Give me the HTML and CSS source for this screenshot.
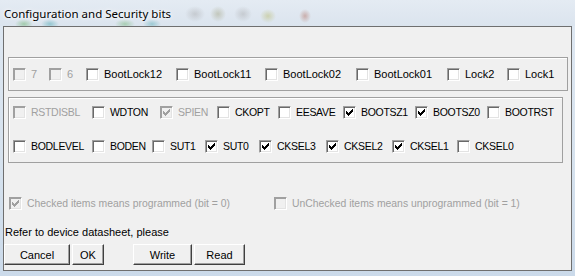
FILE: index.html
```html
<!DOCTYPE html>
<html lang="en">
<head>
    <meta charset="UTF-8">
    <title>Configuration and Security bits</title>
    <link rel="stylesheet" href="styles.css">
</head>
<body>
<svg width="0" height="0" class="defs">
    <symbol id="tick" viewBox="0 0 7 7">
        <path d="M6 0h1v1h-1zM5 1h2v1h-2zM0 2h1v1h-1zM4 2h3v1h-3zM0 3h2v1h-2zM3 3h3v1h-3zM0 4h5v1h-5zM1 5h3v1h-3zM2 6h1v1h-1z"/>
    </symbol>
</svg>
<div class="window">
    <div class="titlebar">
        <span class="title">Configuration and Security bits</span>
    </div>

    <div class="client">
        <!-- Lock bits -->
        <div class="group group-lock">
            <div class="row">
                <label class="item w36 disabled"><span class="box"></span>7</label>
                <label class="item w37 disabled"><span class="box"></span>6</label>
                <label class="item w90"><span class="box"></span>BootLock12</label>
                <label class="item w89"><span class="box"></span>BootLock11</label>
                <label class="item w91"><span class="box"></span>BootLock02</label>
                <label class="item w91"><span class="box"></span>BootLock01</label>
                <label class="item w60"><span class="box"></span>Lock2</label>
                <label class="item"><span class="box"></span>Lock1</label>
            </div>
        </div>

        <!-- Fuse bits -->
        <div class="group group-fuse">
            <div class="row">
                <label class="item w79 disabled"><span class="box"></span>RSTDISBL</label>
                <label class="item w68"><span class="box"></span>WDTON</label>
                <label class="item w57 disabled"><span class="box"><svg class="tick"><use href="#tick"/></svg></span>SPIEN</label>
                <label class="item w61"><span class="box"></span>CKOPT</label>
                <label class="item w65"><span class="box"></span>EESAVE</label>
                <label class="item w72"><span class="box"><svg class="tick"><use href="#tick"/></svg></span>BOOTSZ1</label>
                <label class="item w72"><span class="box"><svg class="tick"><use href="#tick"/></svg></span>BOOTSZ0</label>
                <label class="item"><span class="box"></span>BOOTRST</label>
            </div>
            <div class="row">
                <label class="item w79"><span class="box"></span>BODLEVEL</label>
                <label class="item w60"><span class="box"></span>BODEN</label>
                <label class="item w53"><span class="box"></span>SUT1</label>
                <label class="item w54"><span class="box"><svg class="tick"><use href="#tick"/></svg></span>SUT0</label>
                <label class="item w67"><span class="box"><svg class="tick"><use href="#tick"/></svg></span>CKSEL3</label>
                <label class="item w66"><span class="box"><svg class="tick"><use href="#tick"/></svg></span>CKSEL2</label>
                <label class="item w65"><span class="box"><svg class="tick"><use href="#tick"/></svg></span>CKSEL1</label>
                <label class="item"><span class="box"></span>CKSEL0</label>
            </div>
        </div>

        <!-- Legend -->
        <div class="legend">
            <label class="item w265 disabled"><span class="box"><svg class="tick"><use href="#tick"/></svg></span>Checked items means programmed (bit = 0)</label>
            <label class="item disabled"><span class="box"></span>UnChecked items means unprogrammed (bit = 1)</label>
        </div>

        <div class="note">Refer to device datasheet, please</div>

        <div class="buttons">
            <button class="btn btn-cancel">Cancel</button>
            <button class="btn btn-ok">OK</button>
            <button class="btn btn-write">Write</button>
            <button class="btn btn-read">Read</button>
        </div>
    </div>
</div>
</body>
</html>
```

FILE: styles.css
```css
body {
    margin: 0;
    font-family: "Liberation Sans", Arial, sans-serif;
    font-size: 11px;
    color: #000;
    background: #c8d8ea;
}

.defs {
    position: absolute;
}

.window {
    width: 575px;
    height: 276px;
    background: linear-gradient(180deg, #dfe8f2 0%, #d6e2ee 60%, #cbdaea 100%);
    overflow: hidden;
}

/* Aero title bar with the blurred desktop behind it */
.titlebar {
    height: 26px;
    padding-left: 4px;
    display: flex;
    align-items: center;
    background:
        radial-gradient(ellipse 9px 5px at 24px 24px, rgba(90, 170, 90, 0.45), transparent),
        radial-gradient(ellipse 9px 5px at 50px 24px, rgba(60, 160, 170, 0.45), transparent),
        radial-gradient(ellipse 10px 5px at 125px 24px, rgba(90, 170, 90, 0.4), transparent),
        radial-gradient(ellipse 9px 5px at 152px 24px, rgba(60, 160, 170, 0.4), transparent),
        radial-gradient(ellipse 10px 8px at 195px 14px, rgba(150, 150, 150, 0.35), transparent),
        radial-gradient(ellipse 8px 8px at 218px 14px, rgba(150, 150, 110, 0.4), transparent),
        radial-gradient(ellipse 9px 8px at 243px 14px, rgba(150, 150, 150, 0.35), transparent),
        radial-gradient(ellipse 8px 7px at 268px 16px, rgba(170, 170, 60, 0.35), transparent),
        radial-gradient(ellipse 6px 7px at 305px 16px, rgba(170, 90, 70, 0.4), transparent),
        linear-gradient(180deg, #e4ebf3 0%, #dbe4ee 100%);
}

.title {
    font-family: "Noto Sans", sans-serif;
    font-size: 11.5px;
    color: #000;
    text-shadow: 0 0 6px #fff, 0 0 3px #fff;
}

.client {
    box-sizing: border-box;
    width: 569px;
    height: 245px;
    margin-left: 3px;
    border: 1px solid #6f6f6f;
    background: #f0f0f0;
    padding-top: 30px;
    display: flex;
    flex-direction: column;
}

.group {
    box-sizing: border-box;
    margin-left: 4px;
    border: 1px solid #a0a0a0;
    box-shadow: inset 1px 1px 0 #fff;
    padding-left: 4px;
}

.group-lock {
    width: 560px;
    height: 34px;
    display: flex;
    align-items: center;
}

.group-fuse {
    width: 555px;
    height: 66px;
    margin-top: 6px;
    padding-top: 6px;
    display: flex;
    flex-direction: column;
    gap: 17px;
    font-size: 10.5px;
    letter-spacing: -0.3px;
}

.row {
    display: flex;
    align-items: center;
    height: 17px;
}

.item {
    display: flex;
    align-items: center;
    flex: none;
    white-space: nowrap;
    line-height: 13px;
}

.item.disabled {
    color: #a0a0a0;
}

.box {
    box-sizing: border-box;
    width: 13px;
    height: 13px;
    margin-right: 5px;
    border: 1px solid;
    border-color: #a0a0a0 #fff #fff #a0a0a0;
    box-shadow: inset 1px 1px 0 #696969, inset -1px -1px 0 #e3e3e3;
    background: #fff;
    display: flex;
    align-items: center;
    justify-content: center;
}

.disabled .box {
    background: #f0f0f0;
    box-shadow: inset 1px 1px 0 #a0a0a0, inset -1px -1px 0 #e3e3e3;
}

.tick {
    width: 7px;
    height: 7px;
    fill: #000;
    shape-rendering: crispEdges;
}

.disabled .tick {
    fill: #a0a0a0;
}

.w36 { width: 36px; }
.w37 { width: 37px; }
.w53 { width: 53px; }
.w54 { width: 54px; }
.w57 { width: 57px; }
.w60 { width: 60px; }
.w61 { width: 61px; }
.w65 { width: 65px; }
.w66 { width: 66px; }
.w67 { width: 67px; }
.w68 { width: 68px; }
.w72 { width: 72px; }
.w79 { width: 79px; }
.w89 { width: 89px; }
.w90 { width: 90px; }
.w91 { width: 91px; }
.w265 { width: 265px; }

.legend {
    display: flex;
    margin-top: 34px;
    padding-left: 5px;
    height: 13px;
    font-size: 10.4px;
}

.note {
    margin-top: 16px;
    padding-left: 1px;
    line-height: 13px;
}

.buttons {
    display: flex;
    margin-top: 5px;
}

.btn {
    box-sizing: border-box;
    height: 21px;
    padding: 0;
    font-family: "Liberation Sans", Arial, sans-serif;
    font-size: 11px;
    color: #000;
    background: #f0f0f0;
    border: 1px solid;
    border-color: #fff #404040 #404040 #fff;
    box-shadow: inset -1px -1px 0 #a0a0a0;
    border-radius: 0;
}

.btn-cancel { width: 66px; }
.btn-ok { width: 32px; margin-left: 2px; }
.btn-write { width: 59px; margin-left: 29px; }
.btn-read { width: 51px; margin-left: 2px; }
```
